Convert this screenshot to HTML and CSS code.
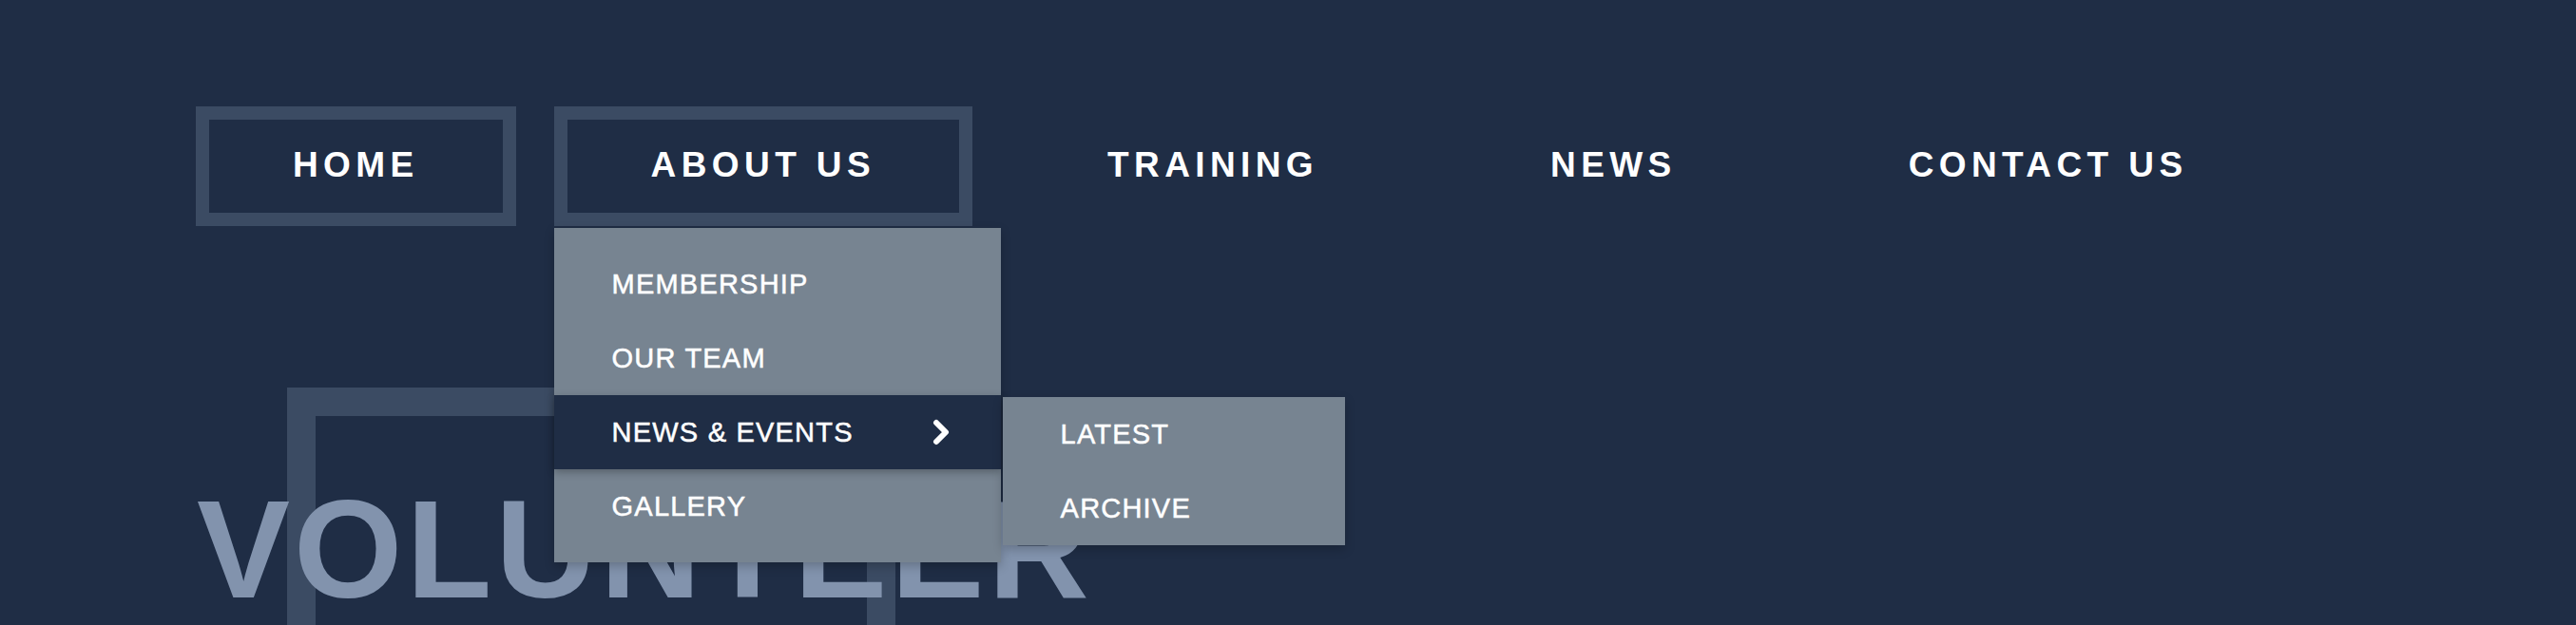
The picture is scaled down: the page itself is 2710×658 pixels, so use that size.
FILE: index.html
```html
<!DOCTYPE html>
<html lang="en">
<head>
<meta charset="utf-8">
<title>Menu</title>
<link rel="stylesheet" href="styles.css">
</head>
<body>
<div class="page">
  <nav class="nav">
    <ul class="nav-list">
      <li class="nav-item"><a class="nav-link framed" href="#">HOME</a></li>
      <li class="nav-item has-drop"><a class="nav-link framed" href="#">ABOUT US</a>
        <ul class="dropdown">
          <li class="drop-item"><a href="#">MEMBERSHIP</a></li>
          <li class="drop-item"><a href="#">OUR TEAM</a></li>
          <li class="drop-item active"><a href="#">NEWS &amp; EVENTS</a>
            <svg class="chev" width="20" height="28" viewBox="0 0 20 28" aria-hidden="true"><path d="M4 4 L14 14 L4 24" fill="none" stroke="#fff" stroke-width="6" stroke-linecap="round" stroke-linejoin="round"/></svg>
            <ul class="submenu">
              <li class="drop-item"><a href="#">LATEST</a></li>
              <li class="drop-item"><a href="#">ARCHIVE</a></li>
            </ul>
          </li>
          <li class="drop-item"><a href="#">GALLERY</a></li>
        </ul>
      </li>
      <li class="nav-item"><a class="nav-link" href="#">TRAINING</a></li>
      <li class="nav-item"><a class="nav-link" href="#">NEWS</a></li>
      <li class="nav-item"><a class="nav-link" href="#">CONTACT US</a></li>
    </ul>
  </nav>
  <section class="hero">
    <div class="hero-frame"></div>
    <h1 class="hero-title">VOLUNTEER</h1>
  </section>
</div>
</body>
</html>
```
FILE: styles.css
```css
html, body {
  margin: 0;
  height: 100%;
  overflow: hidden;
}
body {
  background: #1f2d45;
  font-family: "Liberation Sans", Arial, sans-serif;
  color: #fff;
}
.page {
  padding: 112px 0 0 206px;
}
.nav-list {
  list-style: none;
  margin: 0;
  padding: 0;
  display: flex;
  gap: 40px;
}
.nav-item {
  position: relative;
}
.nav-link {
  display: block;
  border: 14px solid transparent;
  padding: 28px 88px 30px;
  line-height: 40px;
  font-size: 37px;
  font-weight: 700;
  letter-spacing: 5.4px;
  color: #fff;
  text-decoration: none;
  white-space: nowrap;
}
.nav-link.framed {
  border-color: #3b4b63;
}
.dropdown, .submenu {
  list-style: none;
  margin: 0;
  padding: 0;
  background: #778491;
  box-shadow: 0 4px 10px rgba(0, 0, 0, 0.22);
}
.dropdown {
  position: absolute;
  z-index: 10;
  top: calc(100% + 2px);
  left: 0;
  width: 470px;
  padding: 20px 0;
}
.drop-item {
  position: relative;
  display: flex;
  align-items: center;
  height: 78px;
  padding: 0 52px 0 61px;
  font-size: 29px;
  letter-spacing: 1.2px;
  white-space: nowrap;
  -webkit-text-stroke: 0.5px #fff;
}
.drop-item a {
  color: #fff;
  text-decoration: none;
}
.drop-item.active {
  background: #1f2d45;
  z-index: 2;
  box-shadow: 0 3px 8px rgba(0, 0, 0, 0.28);
}
.chev {
  margin-left: auto;
}
.submenu {
  position: absolute;
  top: 2px;
  left: calc(100% + 2px);
  width: 360px;
}
.hero {
  display: grid;
  margin-top: 170px;
}
.hero-frame,
.hero-title {
  grid-area: 1 / 1;
}
.hero-frame {
  margin-left: 96px;
  width: 580px;
  height: 220px;
  border: 30px solid #3b4b63;
  border-bottom: 0;
}
.hero-title {
  margin: 97px 0 0 1px;
  font-size: 147px;
  line-height: 147px;
  font-weight: 700;
  letter-spacing: 4px;
  color: #8293ad;
}
```
